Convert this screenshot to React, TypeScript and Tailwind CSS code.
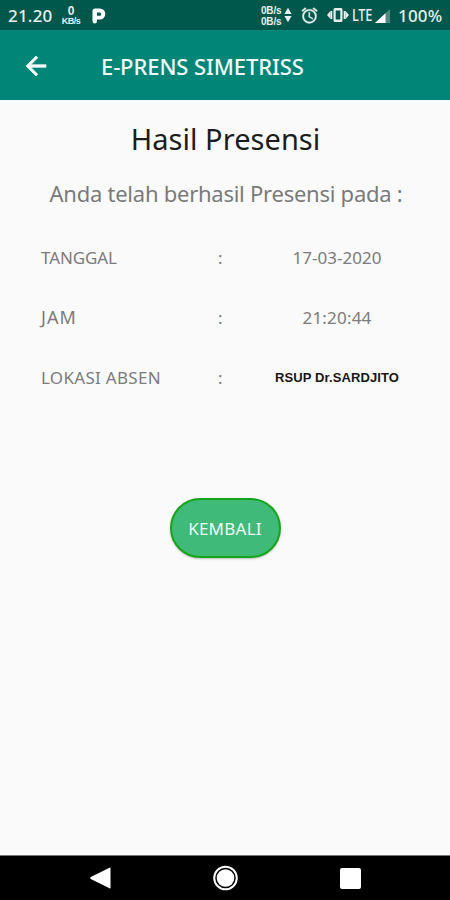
interface DetailRowProps {
  label: string;
  value: string;
  labelClass: string;
  valueClass?: string;
}

const details: DetailRowProps[] = [
  {
    label: "TANGGAL",
    value: "17-03-2020",
    labelClass: "tracking-[-0.1px]",
    valueClass: "tracking-[0.05px]",
  },
  {
    label: "JAM",
    value: "21:20:44",
    labelClass: "text-[18px] tracking-[1.1px]",
    valueClass: "tracking-[0.2px]",
  },
  {
    label: "LOKASI ABSEN",
    value: "RSUP Dr.SARDJITO",
    labelClass: "pt-px tracking-[0.3px]",
    valueClass:
      "font-['Liberation_Sans',sans-serif] text-[13px] font-bold tracking-[0.1px] whitespace-nowrap text-[#161616]",
  },
];

function StatusBar() {
  return (
    <header className="flex h-[30px] shrink-0 items-center bg-[#00574b] text-[#e6efed]">
      <span className="ml-2 w-[45px] text-[17px] leading-none font-medium tracking-[0.2px] whitespace-nowrap">
        21.20
      </span>
      <div className="mt-px ml-2 flex w-5 flex-col items-center font-['Liberation_Sans',sans-serif] font-bold">
        <span className="text-[12px] leading-[11px]">0</span>
        <span className="text-[9px] leading-[9px] tracking-[-0.5px]">
          KB/s
        </span>
      </div>
      <svg
        viewBox="0 0 14 16"
        className="mt-px ml-[11px] h-4 w-[14px]"
        fill="#fff"
        fillRule="evenodd"
      >
        <path d="M0.500 3Q0.500 0.500 3 0.500H7.800A5.500 5.500 0 0 1 7.800 11.500H5V13Q5 15.500 2.700 15.500Q0.500 15.500 0.500 13zM5 4.500V7.800H7.600A1.650 1.650 0 0 0 7.600 4.500z" />
      </svg>

      <div className="ml-auto flex h-full items-center">
        <div className="mt-px flex w-[22px] flex-col font-['Liberation_Sans',sans-serif] text-[10px] leading-[11px] font-bold tracking-[-0.2px] whitespace-nowrap">
          <span>0B/s</span>
          <span>0B/s</span>
        </div>
        <svg viewBox="0 0 8 16" className="ml-px h-4 w-2" fill="currentColor">
          <path d="M4 .8L7.600 7H.4zM4 15.200L7.600 9H.4z" />
        </svg>
        <svg
          viewBox="0 0 24 24"
          className="ml-2 h-[19px] w-[19px]"
          fill="currentColor"
          stroke="currentColor"
          strokeWidth="0.4"
        >
          <path d="M22 5.72l-4.6-3.86-1.29 1.53 4.6 3.86L22 5.72zM7.88 3.39L6.6 1.86 2 5.71l1.29 1.53 4.59-3.85zM12.5 8H11v6l4.75 2.85.75-1.23-4-2.37V8zM12 4c-4.97 0-9 4.03-9 9s4.02 9 9 9a9 9 0 0 0 0-18zm0 16c-3.87 0-7-3.13-7-7s3.13-7 7-7 7 3.13 7 7-3.13 7-7 7z" />
        </svg>
        <svg
          viewBox="0 0 22 16"
          className="ml-2 h-4 w-[22px]"
          fill="currentColor"
        >
          <path d="M0 8l3-3.500v7zM22 8l-3-3.500v7zM3.200 4H5.300v8H3.200zM16.700 4h2.100v8h-2.100z" />
          <path
            fillRule="evenodd"
            d="M8 1h6q1.500 0 1.500 1.500v11Q15.500 15 14 15H8q-1.500 0-1.500-1.500v-11Q6.500 1 8 1zM8.700 3.500v9h4.600v-9z"
          />
        </svg>
        <span className="ml-[3px] flex w-[23px] text-[16px] leading-none font-medium tracking-[-0.3px] whitespace-nowrap">
          <span className="origin-left scale-x-[0.8]">LTE</span>
        </span>
        <svg viewBox="0 0 15 14" className="mt-px h-[14px] w-[15px]">
          <path d="M15 0v14H0z" fill="#4d8981" />
          <path d="M10.500 4.200V14H0z" fill="#fff" />
        </svg>
        <span className="mr-[7px] ml-2 w-[45px] text-[17px] leading-none font-medium tracking-[0.2px] whitespace-nowrap">
          100%
        </span>
      </div>
    </header>
  );
}

function AppBar() {
  return (
    <div className="flex h-[70px] shrink-0 items-center bg-[#008577] text-[#f2f9f8]">
      <svg
        viewBox="0 0 24 24"
        className="mt-px ml-[21px] h-[30px] w-[30px]"
        fill="currentColor"
      >
        <path
          d="M20 11H7.830l5.590-5.590L12 4l-8 8 8 8 1.410-1.410L7.830 13H20v-2z"
          stroke="currentColor"
          strokeWidth="0.6"
        />
      </svg>
      <h1 className="mt-px ml-[50px] text-[22px] leading-none font-medium tracking-[-0.1px] whitespace-nowrap">
        E-PRENS SIMETRISS
      </h1>
    </div>
  );
}

function DetailRow({
  label,
  value,
  labelClass,
  valueClass = "",
}: DetailRowProps) {
  return (
    <div className="flex h-[60px] items-center text-[17px] leading-none text-[#7b7b7b]">
      <span className={`w-[160px] pl-[10px] ${labelClass}`}>{label}</span>
      <span className="w-[59px] pl-[27px]">:</span>
      <span className={`w-[174px] text-center ${valueClass}`}>{value}</span>
    </div>
  );
}

function NavigationBar() {
  return (
    <nav className="flex h-[45px] shrink-0 items-center border-t border-[#777] bg-black pl-[89px]">
      <svg viewBox="0 0 22 22" className="h-[22px] w-[22px]" fill="#fff">
        <path d="M21.500 1.200v19.600q0 1-1 .5L1.800 12q-1.400-1 0-2L20.500.7q1-.5 1 .5z" />
      </svg>
      <svg viewBox="0 0 26 26" className="ml-[101px] h-[26px] w-[26px]">
        <circle
          cx="13.500"
          cy="13"
          r="11.300"
          fill="none"
          stroke="#fff"
          strokeWidth="2"
        />
        <circle cx="13.500" cy="13" r="8.800" fill="#fff" />
      </svg>
      <div className="ml-[102px] h-[21px] w-[21px] rounded-[2px] bg-white" />
    </nav>
  );
}

export default function App() {
  return (
    <div className="flex h-[900px] w-[450px] flex-col overflow-hidden bg-[#fafafa] font-['Noto_Sans',sans-serif]">
      <StatusBar />
      <AppBar />

      <main className="flex flex-1 flex-col">
        <h2 className="mt-[19px] pl-px text-center text-[29px] leading-[40px] tracking-[0.05px] text-[#1c1c1c]">
          Hasil Presensi
        </h2>
        <p className="mt-[19px] pl-[2px] text-center text-[22px] leading-[30px] tracking-[-0.25px] whitespace-nowrap text-[#7a7a7a]">
          Anda telah berhasil Presensi pada :
        </p>

        <section className="mt-[19px] ml-[31px]">
          {details.map((detail) => (
            <DetailRow key={detail.label} {...detail} />
          ))}
        </section>

        <button
          type="button"
          className="mt-[91px] flex h-[60px] w-[111px] items-center justify-center self-center rounded-full border-2 border-[#14a51c] bg-[#3fba78] text-[17px] leading-none tracking-[0.25px] text-[#f0faf4] shadow-[0_1px_2px_rgba(0,0,0,0.25)]"
        >
          KEMBALI
        </button>
      </main>

      <NavigationBar />
    </div>
  );
}
